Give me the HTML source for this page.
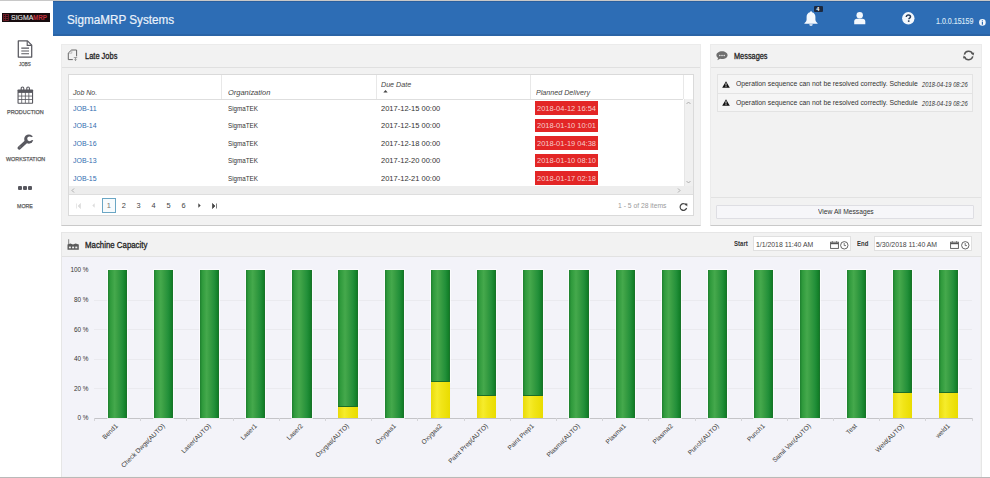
<!DOCTYPE html>
<html><head><meta charset="utf-8"><style>
*{margin:0;padding:0;box-sizing:border-box}
html,body{width:990px;height:478px;overflow:hidden;background:#fff;font-family:"Liberation Sans", sans-serif;color:#333;position:relative}
.a{position:absolute}
.t{position:absolute;white-space:nowrap;line-height:1}
</style></head>
<body>
<div class="a" style="left:53px;top:1px;width:937px;height:35px;background:#2d6db5"></div>
<div class="a" style="left:53px;top:1px;width:937px;height:1px;background:#2a5f9e"></div>
<div class="a" style="left:53px;top:34px;width:937px;height:1.5px;background:#2a64a6"></div>
<div class="t" id="t0" style="left:66.7px;top:13.21px;font-size:13.4px;color:#eaf2fb;transform:scaleX(0.8749);transform-origin:0 0;-webkit-text-stroke:0.2px #eaf2fb">SigmaMRP Systems</div>
<div class="t" id="t1" style="left:936.3px;top:18.03px;font-size:8.2px;color:#d8e6f6;transform:scaleX(0.8644);transform-origin:0 0;-webkit-text-stroke:0.15px #d8e6f6">1.0.0.15159</div>
<div class="a" style="left:2px;top:13px;width:48px;height:9px;background:#160c0e"></div>
<svg class="a" style="left:3px;top:14px" width="6" height="7" viewBox="0 0 6 7"><g stroke="#7a1f2c" stroke-width="0.8" fill="none"><rect x="0.5" y="0.5" width="5" height="6"/><path d="M0.5 2.5H5.5M0.5 4.5H5.5M2.5 0.5V6.5"/></g></svg>
<div class="t" id="t2" style="left:10.9px;top:14.59px;font-size:6.6px;color:#e0e0e0;transform:scaleX(1.0541);transform-origin:0 0;-webkit-text-stroke:0.1px #e0e0e0">SIGMA</div>
<div class="t" id="t3" style="left:33.4px;top:14.59px;font-size:6.6px;color:#c0303c;transform:scaleX(0.9620);transform-origin:0 0;font-weight:bold">MRP</div>
<svg class="a" style="left:803.5px;top:10.5px" width="14" height="15" viewBox="0 0 14 15"><path fill="#f3f8fd" d="M7 0.3c0.6 0 1 0.4 1 0.9 2.2 0.5 3.4 2.3 3.4 4.6v2.6c0 1.3 0.8 2.5 2.2 3.8v0.6H0.4v-0.6c1.4-1.3 2.2-2.5 2.2-3.8V5.8c0-2.3 1.2-4.1 3.4-4.6 0-0.5 0.4-0.9 1-0.9z M5.3 13.3h3.4c0 1-0.8 1.5-1.7 1.5s-1.7-0.5-1.7-1.5z"/></svg>
<div class="a" style="left:813.5px;top:5.5px;width:9.5px;height:6.7px;background:#1b2940;border-radius:1px"></div>
<div class="t" id="t4" style="left:816.3px;top:6.52px;font-size:5.5px;color:#fff;transform-origin:0 0;font-weight:bold">4</div>
<svg class="a" style="left:853.5px;top:11.8px" width="12" height="13" viewBox="0 0 12 13"><circle cx="5.7" cy="3.2" r="3.2" fill="#f3f8fd"/><path fill="#f3f8fd" d="M0.2 12.3V9.6c0-1.8 1.2-2.8 2.6-2.8h5.8c1.5 0 2.7 1 2.7 2.8v2.7z"/></svg>
<svg class="a" style="left:901.8px;top:11.5px" width="13" height="13" viewBox="0 0 13 13"><circle cx="6.3" cy="6.3" r="6.2" fill="#f3f8fd"/><path d="M4.3 4.9c0-1.2 0.9-2 2.1-2 1.2 0 2.1 0.7 2.1 1.8 0 1.4-1.6 1.5-1.6 2.6" fill="none" stroke="#2b3f5c" stroke-width="1.5"/><rect x="5.9" y="8.3" width="1.6" height="1.6" fill="#2b3f5c"/></svg>
<svg class="a" style="left:978.5px;top:19.2px" width="7" height="7" viewBox="0 0 7 7"><circle cx="3.4" cy="3.4" r="3.3" fill="#f3f8fd"/><rect x="2.8" y="2.9" width="1.2" height="2.8" fill="#2d6db5"/><rect x="2.8" y="1.3" width="1.2" height="1" fill="#2d6db5"/></svg>
<svg class="a" style="left:17px;top:40px" width="16" height="18" viewBox="0 0 16 18"><path d="M1.3 0.9H10.5L14.7 5.1V17.1H1.3Z" fill="none" stroke="#58585f" stroke-width="1.25" stroke-linejoin="round"/><path d="M10.2 1V5.4H14.6" fill="none" stroke="#58585f" stroke-width="1.1"/><path d="M4.3 8.1H12M4.3 11H12M4.3 13.8H12" stroke="#58585f" stroke-width="1.1"/></svg>
<div class="t" id="t5" style="left:19.4px;top:62.47px;font-size:5.8px;color:#5c5c5c;transform:scaleX(0.7662);transform-origin:0 0;-webkit-text-stroke:0.25px #5c5c5c">JOBS</div>
<svg class="a" style="left:16.5px;top:86px" width="17" height="18" viewBox="0 0 17 18"><rect x="0.5" y="3.4" width="15.6" height="14.4" rx="0.8" fill="#58585f"/><g fill="#fff"><rect x="1.60" y="6.90" width="2.75" height="2.75"/><rect x="5.15" y="6.90" width="2.75" height="2.75"/><rect x="8.70" y="6.90" width="2.75" height="2.75"/><rect x="12.25" y="6.90" width="2.75" height="2.75"/><rect x="1.60" y="10.45" width="2.75" height="2.75"/><rect x="5.15" y="10.45" width="2.75" height="2.75"/><rect x="8.70" y="10.45" width="2.75" height="2.75"/><rect x="12.25" y="10.45" width="2.75" height="2.75"/><rect x="1.60" y="14.00" width="2.75" height="2.75"/><rect x="5.15" y="14.00" width="2.75" height="2.75"/><rect x="8.70" y="14.00" width="2.75" height="2.75"/><rect x="12.25" y="14.00" width="2.75" height="2.75"/></g><path d="M4.2 5V2.3a1.3 1.3 0 0 1 2.6 0V5M9.8 5V2.3a1.3 1.3 0 0 1 2.6 0V5" fill="none" stroke="#58585f" stroke-width="1.1"/></svg>
<div class="t" id="t6" style="left:7.2px;top:109.67px;font-size:5.8px;color:#5c5c5c;transform:scaleX(0.9418);transform-origin:0 0;-webkit-text-stroke:0.25px #5c5c5c">PRODUCTION</div>
<svg class="a" style="left:14px;top:131px" width="20" height="20" viewBox="0 0 20 20"><circle cx="14.8" cy="8.1" r="4.6" fill="#58585f"/><path d="M12.6 10.3L5.2 16.9" stroke="#58585f" stroke-width="3.4" stroke-linecap="round"/><circle cx="15.6" cy="7.8" r="2.4" fill="#fff"/><path d="M16 6.6L20 5.6V9.2L16.4 9z" fill="#fff"/><circle cx="6" cy="15.9" r="0.6" fill="#999"/></svg>
<div class="t" id="t7" style="left:5.7px;top:156.87px;font-size:5.8px;color:#5c5c5c;transform:scaleX(0.9268);transform-origin:0 0;-webkit-text-stroke:0.25px #5c5c5c">WORKSTATION</div>
<div class="a" style="left:18px;top:186px;width:4.2px;height:4.3px;background:#58585f;border-radius:1px"></div>
<div class="a" style="left:23px;top:186px;width:4.2px;height:4.3px;background:#58585f;border-radius:1px"></div>
<div class="a" style="left:28px;top:186px;width:4.2px;height:4.3px;background:#58585f;border-radius:1px"></div>
<div class="t" id="t8" style="left:17.3px;top:202.53px;font-size:6.2px;color:#5c5c5c;transform:scaleX(0.8512);transform-origin:0 0;-webkit-text-stroke:0.25px #5c5c5c">MORE</div>
<div class="a" style="left:61px;top:44px;width:640px;height:182px;background:#f2f2f2;border:1px solid #ebebeb;border-bottom:1.5px solid #c9c9c9"></div>
<div class="a" style="left:62px;top:67px;width:638px;height:1px;background:#e0e0e0"></div>
<svg class="a" style="left:66px;top:48px" width="13" height="14" viewBox="0 0 13 14"><path d="M2.3 11.6V5L5.6 2H10.6V8.3M2.3 11.6H6.8" fill="none" stroke="#666" stroke-width="1"/><path d="M5.8 2.2V5.2H2.5" fill="none" stroke="#999" stroke-width="0.6"/><path d="M7.8 9.6H11.2M9.5 9.6V12.6M8.3 11.4L9.5 12.6 10.7 11.4" fill="none" stroke="#888" stroke-width="0.8"/></svg>
<div class="t" id="t9" style="left:85.3px;top:51.55px;font-size:9px;color:#222;transform:scaleX(0.8301);transform-origin:0 0;-webkit-text-stroke:0.3px #222">Late Jobs</div>
<div class="a" style="left:68px;top:74px;width:626px;height:141.8px;background:#fff;border:1px solid #dadada"></div>
<div class="a" style="left:69px;top:99px;width:614px;height:1px;background:#dedede"></div>
<div class="a" style="left:221px;top:75px;width:1px;height:24px;background:#e8e8e8"></div>
<div class="a" style="left:376px;top:75px;width:1px;height:24px;background:#e8e8e8"></div>
<div class="a" style="left:530px;top:75px;width:1px;height:24px;background:#e8e8e8"></div>
<div class="a" style="left:683px;top:75px;width:1px;height:24px;background:#e8e8e8"></div>
<div class="a" style="left:684px;top:99px;width:9px;height:87px;background:#f0f0f0;border-left:1px solid #e6e6e6"></div>
<svg class="a" style="left:686px;top:101px" width="5" height="4" viewBox="0 0 5 4"><path d="M0.5 3L2.5 1 4.5 3" fill="none" stroke="#a0a0a0" stroke-width="0.8"/></svg>
<svg class="a" style="left:686px;top:180px" width="5" height="4" viewBox="0 0 5 4"><path d="M0.5 1L2.5 3 4.5 1" fill="none" stroke="#a0a0a0" stroke-width="0.8"/></svg>
<div class="a" style="left:69px;top:186px;width:624px;height:9px;background:#ededed;border-bottom:1px solid #dedede"></div>
<svg class="a" style="left:71px;top:188px" width="4" height="5" viewBox="0 0 4 5"><path d="M3 0.5L1 2.5 3 4.5" fill="none" stroke="#a0a0a0" stroke-width="0.8"/></svg>
<svg class="a" style="left:677px;top:188px" width="4" height="5" viewBox="0 0 4 5"><path d="M1 0.5L3 2.5 1 4.5" fill="none" stroke="#a0a0a0" stroke-width="0.8"/></svg>
<div class="t" id="t10" style="left:72.9px;top:88.74px;font-size:7.6px;color:#444;transform:scaleX(0.9247);transform-origin:0 0;font-style:italic">Job No.</div>
<div class="t" id="t11" style="left:227.9px;top:88.74px;font-size:7.6px;color:#444;transform:scaleX(0.9823);transform-origin:0 0;font-style:italic">Organization</div>
<div class="t" id="t12" style="left:381.3px;top:80.84px;font-size:7.6px;color:#444;transform:scaleX(0.9379);transform-origin:0 0;font-style:italic">Due Date</div>
<svg class="a" style="left:382.5px;top:90.2px" width="5" height="2.6" viewBox="0 0 5 3"><path d="M0 3L2.5 0 5 3z" fill="#444"/></svg>
<div class="t" id="t13" style="left:536px;top:88.74px;font-size:7.6px;color:#444;transform:scaleX(0.9407);transform-origin:0 0;font-style:italic">Planned Delivery</div>
<div class="t" id="t14" style="left:72.5px;top:104.98px;font-size:7.9px;color:#336eb0;transform:scaleX(0.9017);transform-origin:0 0;">JOB-11</div>
<div class="t" id="t15" style="left:228px;top:104.98px;font-size:7.9px;color:#333;transform:scaleX(0.7954);transform-origin:0 0;">SigmaTEK</div>
<div class="t" id="t16" style="left:381px;top:104.98px;font-size:7.9px;color:#333;transform:scaleX(0.9517);transform-origin:0 0;">2017-12-15 00:00</div>
<div class="a" style="left:535.3px;top:101.10000000000001px;width:62.5px;height:13.6px;background:#e32626"></div>
<div class="t" id="t17" style="left:537px;top:104.98px;font-size:7.9px;color:#f6cccc;transform:scaleX(0.9468);transform-origin:0 0;">2018-04-12 16:54</div>
<div class="t" id="t18" style="left:72.5px;top:122.48px;font-size:7.9px;color:#336eb0;transform:scaleX(0.8817);transform-origin:0 0;">JOB-14</div>
<div class="t" id="t19" style="left:228px;top:122.48px;font-size:7.9px;color:#333;transform:scaleX(0.7954);transform-origin:0 0;">SigmaTEK</div>
<div class="t" id="t20" style="left:381px;top:122.48px;font-size:7.9px;color:#333;transform:scaleX(0.9517);transform-origin:0 0;">2017-12-15 00:00</div>
<div class="a" style="left:535.3px;top:118.6px;width:62.5px;height:13.6px;background:#e32626"></div>
<div class="t" id="t21" style="left:537px;top:122.48px;font-size:7.9px;color:#f6cccc;transform:scaleX(0.9468);transform-origin:0 0;">2018-01-10 10:01</div>
<div class="t" id="t22" style="left:72.5px;top:139.98px;font-size:7.9px;color:#336eb0;transform:scaleX(0.8817);transform-origin:0 0;">JOB-16</div>
<div class="t" id="t23" style="left:228px;top:139.98px;font-size:7.9px;color:#333;transform:scaleX(0.7954);transform-origin:0 0;">SigmaTEK</div>
<div class="t" id="t24" style="left:381px;top:139.98px;font-size:7.9px;color:#333;transform:scaleX(0.9517);transform-origin:0 0;">2017-12-18 00:00</div>
<div class="a" style="left:535.3px;top:136.1px;width:62.5px;height:13.6px;background:#e32626"></div>
<div class="t" id="t25" style="left:537px;top:139.98px;font-size:7.9px;color:#f6cccc;transform:scaleX(0.9468);transform-origin:0 0;">2018-01-19 04:38</div>
<div class="t" id="t26" style="left:72.5px;top:157.48px;font-size:7.9px;color:#336eb0;transform:scaleX(0.8817);transform-origin:0 0;">JOB-13</div>
<div class="t" id="t27" style="left:228px;top:157.48px;font-size:7.9px;color:#333;transform:scaleX(0.7954);transform-origin:0 0;">SigmaTEK</div>
<div class="t" id="t28" style="left:381px;top:157.48px;font-size:7.9px;color:#333;transform:scaleX(0.9517);transform-origin:0 0;">2017-12-20 00:00</div>
<div class="a" style="left:535.3px;top:153.6px;width:62.5px;height:13.6px;background:#e32626"></div>
<div class="t" id="t29" style="left:537px;top:157.48px;font-size:7.9px;color:#f6cccc;transform:scaleX(0.9468);transform-origin:0 0;">2018-01-10 08:10</div>
<div class="t" id="t30" style="left:72.5px;top:174.98px;font-size:7.9px;color:#336eb0;transform:scaleX(0.8817);transform-origin:0 0;">JOB-15</div>
<div class="t" id="t31" style="left:228px;top:174.98px;font-size:7.9px;color:#333;transform:scaleX(0.7954);transform-origin:0 0;">SigmaTEK</div>
<div class="t" id="t32" style="left:381px;top:174.98px;font-size:7.9px;color:#333;transform:scaleX(0.9517);transform-origin:0 0;">2017-12-21 00:00</div>
<div class="a" style="left:535.3px;top:171.1px;width:62.5px;height:13.6px;background:#e32626"></div>
<div class="t" id="t33" style="left:537px;top:174.98px;font-size:7.9px;color:#f6cccc;transform:scaleX(0.9468);transform-origin:0 0;">2018-01-17 02:18</div>
<div class="a" style="left:101.8px;top:198.1px;width:14.6px;height:14.5px;border:1px solid #6aa6c4;background:#f7fbfd"></div>
<div class="t" id="t34" style="left:88.9px;width:40px;text-align:center;top:201.91px;font-size:7.4px;color:#777;">1</div>
<div class="t" id="t35" style="left:103.7px;width:40px;text-align:center;top:201.91px;font-size:7.4px;color:#444;">2</div>
<div class="t" id="t36" style="left:118.6px;width:40px;text-align:center;top:201.91px;font-size:7.4px;color:#444;">3</div>
<div class="t" id="t37" style="left:133.6px;width:40px;text-align:center;top:201.91px;font-size:7.4px;color:#444;">4</div>
<div class="t" id="t38" style="left:148.6px;width:40px;text-align:center;top:201.91px;font-size:7.4px;color:#444;">5</div>
<div class="t" id="t39" style="left:163.6px;width:40px;text-align:center;top:201.91px;font-size:7.4px;color:#444;">6</div>
<svg class="a" style="left:75.5px;top:202.5px" width="5" height="6" viewBox="0 0 5 6"><path d="M0.5 0.5V5.5M4.5 0.5L2 3 4.5 5.5z" fill="#dcdcdc" stroke="#dcdcdc" stroke-width="0.7"/></svg>
<svg class="a" style="left:92px;top:203px" width="3" height="5" viewBox="0 0 3 5"><path d="M2.7 0.3L0.3 2.5 2.7 4.7z" fill="#dcdcdc"/></svg>
<svg class="a" style="left:198px;top:203px" width="3" height="5" viewBox="0 0 3 5"><path d="M0.3 0.3L2.7 2.5 0.3 4.7z" fill="#444"/></svg>
<svg class="a" style="left:212px;top:202.5px" width="5" height="6" viewBox="0 0 5 6"><path d="M0.5 0.5L3 3 0.5 5.5zM4.5 0.5V5.5" fill="#444" stroke="#444" stroke-width="0.7"/></svg>
<div class="t" id="t40" style="left:617.6px;top:201.58px;font-size:7.2px;color:#9a9a9a;transform:scaleX(0.9390);transform-origin:0 0;">1 - 5 of 28 items</div>
<svg class="a" style="left:679px;top:202.5px" width="9" height="8" viewBox="0 0 9 8"><path d="M7.2 2.2A3.3 3.3 0 1 0 7.6 5" fill="none" stroke="#444" stroke-width="1.2"/><path d="M5.3 0.6L8.3 0.6 8.3 3.4z" fill="#444"/></svg>
<div class="a" style="left:710px;top:44px;width:272px;height:182px;background:#f2f2f2;border:1px solid #ebebeb;border-bottom:1.5px solid #c9c9c9"></div>
<div class="a" style="left:711px;top:67px;width:270px;height:1px;background:#e0e0e0"></div>
<svg class="a" style="left:715.5px;top:50.8px" width="12" height="10" viewBox="0 0 12 10"><path d="M6 0.3C9.1 0.3 11.6 2 11.6 4.2 11.6 6.4 9.1 8 6 8 5.3 8 4.7 7.9 4.1 7.8L1.3 9.3 2.2 7C1 6.3 0.4 5.3 0.4 4.2 0.4 2 2.9 0.3 6 0.3z" fill="#6e6e6e"/><circle cx="3.8" cy="4.4" r="0.75" fill="#eee"/><circle cx="6" cy="4.4" r="0.75" fill="#eee"/><circle cx="8.2" cy="4.4" r="0.75" fill="#eee"/></svg>
<div class="t" id="t41" style="left:734.3px;top:51.95px;font-size:9px;color:#222;transform:scaleX(0.8165);transform-origin:0 0;-webkit-text-stroke:0.3px #222">Messages</div>
<svg class="a" style="left:962px;top:48.5px" width="14" height="13" viewBox="0 0 14 13"><path d="M2.4 5.6A4.3 4.3 0 0 1 10.6 5M10.8 7.4A4.3 4.3 0 0 1 2.6 8" fill="none" stroke="#555" stroke-width="1.5"/><path d="M9 4.6L12.2 3.6 11.6 6.6z M4.2 8.4L1 9.4 1.6 6.4z" fill="#555"/></svg>
<div class="a" style="left:716.5px;top:74.2px;width:256px;height:37.8px;background:#f5f5f5;border:1px solid #e3e3e3"></div>
<div class="a" style="left:717px;top:93.2px;width:255px;height:1px;background:#e3e3e3"></div>
<svg class="a" style="left:721.5px;top:80.7px" width="8" height="7" viewBox="0 0 8 7"><path d="M4 0.2L7.8 6.8H0.2z" fill="#111"/><rect x="3.55" y="2.2" width="0.9" height="2.4" fill="#f5f5f5"/><rect x="3.55" y="5.2" width="0.9" height="0.9" fill="#f5f5f5"/></svg>
<div class="t" id="t42" style="left:736px;top:80.44px;font-size:7.6px;color:#333;transform:scaleX(0.8960);transform-origin:0 0;">Operation sequence can not be resolved correctly. Schedule</div>
<div class="t" id="t43" style="left:922.4px;top:81.45px;font-size:7.0px;color:#333;transform:scaleX(0.8249);transform-origin:0 0;font-style:italic">2018-04-19 08:26</div>
<svg class="a" style="left:721.5px;top:99.1px" width="8" height="7" viewBox="0 0 8 7"><path d="M4 0.2L7.8 6.8H0.2z" fill="#111"/><rect x="3.55" y="2.2" width="0.9" height="2.4" fill="#f5f5f5"/><rect x="3.55" y="5.2" width="0.9" height="0.9" fill="#f5f5f5"/></svg>
<div class="t" id="t44" style="left:736px;top:98.84px;font-size:7.6px;color:#333;transform:scaleX(0.8960);transform-origin:0 0;">Operation sequence can not be resolved correctly. Schedule</div>
<div class="t" id="t45" style="left:922.4px;top:99.85px;font-size:7.0px;color:#333;transform:scaleX(0.8249);transform-origin:0 0;font-style:italic">2018-04-19 08:26</div>
<div class="a" style="left:711px;top:197px;width:270px;height:1px;background:#e2e2e2"></div>
<div class="a" style="left:716.3px;top:204.6px;width:258.2px;height:14.2px;background:#f6f6f9;border:1px solid #dedee3;border-radius:1px"></div>
<div class="t" id="t46" style="left:817.6px;top:208.24px;font-size:7.6px;color:#333;transform:scaleX(0.8817);transform-origin:0 0;">View All Messages</div>
<div class="a" style="left:61px;top:232px;width:921px;height:250px;background:#f2f2f2;border:1px solid #e6e6e6"></div>
<div class="a" style="left:62px;top:256px;width:919px;height:1px;background:#e2e2e2"></div>
<div class="a" style="left:62px;top:257px;width:918px;height:219px;background:#f3f3f9"></div>
<svg class="a" style="left:66px;top:238px" width="14" height="13" viewBox="0 0 14 13"><path d="M2.6 1.2V7" stroke="#999" stroke-width="1.2"/><path d="M1.5 11.8V6.4L4.4 5.6 7 6.4 9.6 5.6 12.8 6.4V11.8Z" fill="#5a5a5a"/><g fill="#eee"><rect x="2.9" y="8.6" width="2" height="1.7"/><rect x="6.1" y="8.6" width="2" height="1.7"/><rect x="9.3" y="8.6" width="2" height="1.7"/></g></svg>
<div class="t" id="t47" style="left:85.4px;top:240.75px;font-size:9px;color:#222;transform:scaleX(0.8722);transform-origin:0 0;-webkit-text-stroke:0.3px #222">Machine Capacity</div>
<div class="t" id="t48" style="left:733.8px;top:239.68px;font-size:7.2px;color:#333;transform:scaleX(0.8419);transform-origin:0 0;font-weight:bold">Start</div>
<div class="t" id="t49" style="left:856.8px;top:239.68px;font-size:7.2px;color:#333;transform:scaleX(0.8322);transform-origin:0 0;font-weight:bold">End</div>
<div class="a" style="left:753.3px;top:236.2px;width:98px;height:15.1px;background:#fff;border:1px solid #e0e0e0"></div>
<div class="t" id="t50" style="left:755.8px;top:240.58px;font-size:7.2px;color:#444;transform:scaleX(0.9563);transform-origin:0 0;">1/1/2018 11:40 AM</div>
<svg class="a" style="left:829.8px;top:240.8px" width="9" height="8" viewBox="0 0 9 8"><rect x="0.6" y="1.2" width="7.8" height="6.2" fill="none" stroke="#555" stroke-width="0.9"/><path d="M0.6 2.6H8.4" stroke="#555" stroke-width="1.2"/><path d="M2.4 0.2V1.5M6.6 0.2V1.5" stroke="#555" stroke-width="0.8"/></svg>
<svg class="a" style="left:840.2px;top:240.8px" width="9" height="9" viewBox="0 0 9 9"><circle cx="4.3" cy="4.3" r="3.7" fill="none" stroke="#555" stroke-width="0.9"/><path d="M4.2 2V4.6H6" fill="none" stroke="#555" stroke-width="0.8"/></svg>
<div class="a" style="left:873.8px;top:236.2px;width:98.5px;height:15.1px;background:#fff;border:1px solid #e0e0e0"></div>
<div class="t" id="t51" style="left:875.5px;top:240.58px;font-size:7.2px;color:#444;transform:scaleX(0.9575);transform-origin:0 0;">5/30/2018 11:40 AM</div>
<svg class="a" style="left:950.2px;top:240.8px" width="9" height="8" viewBox="0 0 9 8"><rect x="0.6" y="1.2" width="7.8" height="6.2" fill="none" stroke="#555" stroke-width="0.9"/><path d="M0.6 2.6H8.4" stroke="#555" stroke-width="1.2"/><path d="M2.4 0.2V1.5M6.6 0.2V1.5" stroke="#555" stroke-width="0.8"/></svg>
<svg class="a" style="left:960.9px;top:240.8px" width="9" height="9" viewBox="0 0 9 9"><circle cx="4.3" cy="4.3" r="3.7" fill="none" stroke="#555" stroke-width="0.9"/><path d="M4.2 2V4.6H6" fill="none" stroke="#555" stroke-width="0.8"/></svg>
<div class="t" id="t52" style="left:28.5px;width:60px;text-align:right;top:267.36px;font-size:6.4px;color:#333;">100 %</div>
<div class="a" style="left:94px;top:299.6px;width:878px;height:0.6px;background:#eaeaef"></div>
<div class="t" id="t53" style="left:28.5px;width:60px;text-align:right;top:296.96px;font-size:6.4px;color:#333;">80 %</div>
<div class="a" style="left:94px;top:329.2px;width:878px;height:0.6px;background:#eaeaef"></div>
<div class="t" id="t54" style="left:28.5px;width:60px;text-align:right;top:326.56px;font-size:6.4px;color:#333;">60 %</div>
<div class="a" style="left:94px;top:358.8px;width:878px;height:0.6px;background:#eaeaef"></div>
<div class="t" id="t55" style="left:28.5px;width:60px;text-align:right;top:356.16px;font-size:6.4px;color:#333;">40 %</div>
<div class="a" style="left:94px;top:388.4px;width:878px;height:0.6px;background:#eaeaef"></div>
<div class="t" id="t56" style="left:28.5px;width:60px;text-align:right;top:385.76px;font-size:6.4px;color:#333;">20 %</div>
<div class="t" id="t57" style="left:28.5px;width:60px;text-align:right;top:415.36px;font-size:6.4px;color:#333;">0 %</div>
<div class="a" style="left:93.5px;top:417.8px;width:878px;height:1px;background:#c4c4c8"></div>
<div class="a" style="left:94.1px;top:418px;width:0.8px;height:2.5px;background:#d4d4d8"></div>
<div class="a" style="left:140.286px;top:418px;width:0.8px;height:2.5px;background:#d4d4d8"></div>
<div class="a" style="left:186.47199999999998px;top:418px;width:0.8px;height:2.5px;background:#d4d4d8"></div>
<div class="a" style="left:232.658px;top:418px;width:0.8px;height:2.5px;background:#d4d4d8"></div>
<div class="a" style="left:278.844px;top:418px;width:0.8px;height:2.5px;background:#d4d4d8"></div>
<div class="a" style="left:325.03px;top:418px;width:0.8px;height:2.5px;background:#d4d4d8"></div>
<div class="a" style="left:371.216px;top:418px;width:0.8px;height:2.5px;background:#d4d4d8"></div>
<div class="a" style="left:417.40200000000004px;top:418px;width:0.8px;height:2.5px;background:#d4d4d8"></div>
<div class="a" style="left:463.58799999999997px;top:418px;width:0.8px;height:2.5px;background:#d4d4d8"></div>
<div class="a" style="left:509.774px;top:418px;width:0.8px;height:2.5px;background:#d4d4d8"></div>
<div class="a" style="left:555.96px;top:418px;width:0.8px;height:2.5px;background:#d4d4d8"></div>
<div class="a" style="left:602.146px;top:418px;width:0.8px;height:2.5px;background:#d4d4d8"></div>
<div class="a" style="left:648.332px;top:418px;width:0.8px;height:2.5px;background:#d4d4d8"></div>
<div class="a" style="left:694.518px;top:418px;width:0.8px;height:2.5px;background:#d4d4d8"></div>
<div class="a" style="left:740.7040000000001px;top:418px;width:0.8px;height:2.5px;background:#d4d4d8"></div>
<div class="a" style="left:786.89px;top:418px;width:0.8px;height:2.5px;background:#d4d4d8"></div>
<div class="a" style="left:833.076px;top:418px;width:0.8px;height:2.5px;background:#d4d4d8"></div>
<div class="a" style="left:879.2620000000001px;top:418px;width:0.8px;height:2.5px;background:#d4d4d8"></div>
<div class="a" style="left:925.448px;top:418px;width:0.8px;height:2.5px;background:#d4d4d8"></div>
<div class="a" style="left:971.634px;top:418px;width:0.8px;height:2.5px;background:#d4d4d8"></div>
<div class="a" style="left:107.54px;top:270.0px;width:19.3px;height:147.556px;background:linear-gradient(90deg,#1d7f2e 0%,#2f9a3c 12%,#45a94c 35%,#3a9f44 50%,#23903a 75%,#138029 92%,#1a6e2a 100%);box-shadow:0 0 0 0.8px rgba(255,255,255,0.85)"></div>
<div class="a" style="left:107.54px;top:417.556px;width:19.3px;height:0.444px;background:linear-gradient(90deg,#e9da08 0%,#f6ec2c 32%,#f1e518 55%,#e9dc00 100%)"></div>
<div class="t" id="t58" style="left:17.393px;width:100px;text-align:right;top:422.15px;font-size:6.5px;color:#333;transform:rotate(-45deg);transform-origin:100% 50%;">Bend1</div>
<div class="a" style="left:153.73px;top:270.0px;width:19.3px;height:148.0px;background:linear-gradient(90deg,#1d7f2e 0%,#2f9a3c 12%,#45a94c 35%,#3a9f44 50%,#23903a 75%,#138029 92%,#1a6e2a 100%);box-shadow:0 0 0 0.8px rgba(255,255,255,0.85)"></div>
<div class="t" id="t59" style="left:63.57899999999998px;width:100px;text-align:right;top:422.15px;font-size:6.5px;color:#333;transform:rotate(-45deg);transform-origin:100% 50%;">Check Dwgs(AUTO)</div>
<div class="a" style="left:199.91px;top:270.0px;width:19.3px;height:148.0px;background:linear-gradient(90deg,#1d7f2e 0%,#2f9a3c 12%,#45a94c 35%,#3a9f44 50%,#23903a 75%,#138029 92%,#1a6e2a 100%);box-shadow:0 0 0 0.8px rgba(255,255,255,0.85)"></div>
<div class="t" id="t60" style="left:109.76499999999999px;width:100px;text-align:right;top:422.15px;font-size:6.5px;color:#333;transform:rotate(-45deg);transform-origin:100% 50%;">Laser(AUTO)</div>
<div class="a" style="left:246.1px;top:270.0px;width:19.3px;height:148.0px;background:linear-gradient(90deg,#1d7f2e 0%,#2f9a3c 12%,#45a94c 35%,#3a9f44 50%,#23903a 75%,#138029 92%,#1a6e2a 100%);box-shadow:0 0 0 0.8px rgba(255,255,255,0.85)"></div>
<div class="t" id="t61" style="left:155.951px;width:100px;text-align:right;top:422.15px;font-size:6.5px;color:#333;transform:rotate(-45deg);transform-origin:100% 50%;">Laser1</div>
<div class="a" style="left:292.29px;top:270.0px;width:19.3px;height:148.0px;background:linear-gradient(90deg,#1d7f2e 0%,#2f9a3c 12%,#45a94c 35%,#3a9f44 50%,#23903a 75%,#138029 92%,#1a6e2a 100%);box-shadow:0 0 0 0.8px rgba(255,255,255,0.85)"></div>
<div class="t" id="t62" style="left:202.137px;width:100px;text-align:right;top:422.15px;font-size:6.5px;color:#333;transform:rotate(-45deg);transform-origin:100% 50%;">Laser2</div>
<div class="a" style="left:338.47px;top:270.0px;width:19.3px;height:136.9px;background:linear-gradient(90deg,#1d7f2e 0%,#2f9a3c 12%,#45a94c 35%,#3a9f44 50%,#23903a 75%,#138029 92%,#1a6e2a 100%);box-shadow:0 0 0 0.8px rgba(255,255,255,0.85)"></div>
<div class="a" style="left:338.47px;top:406.9px;width:19.3px;height:11.1px;background:linear-gradient(90deg,#e9da08 0%,#f6ec2c 32%,#f1e518 55%,#e9dc00 100%)"></div>
<div class="a" style="left:338.47px;top:406.09999999999997px;width:19.3px;height:0.8px;background:#1c6e28"></div>
<div class="t" id="t63" style="left:248.32299999999998px;width:100px;text-align:right;top:422.15px;font-size:6.5px;color:#333;transform:rotate(-45deg);transform-origin:100% 50%;">Oxygas(AUTO)</div>
<div class="a" style="left:384.66px;top:270.0px;width:19.3px;height:148.0px;background:linear-gradient(90deg,#1d7f2e 0%,#2f9a3c 12%,#45a94c 35%,#3a9f44 50%,#23903a 75%,#138029 92%,#1a6e2a 100%);box-shadow:0 0 0 0.8px rgba(255,255,255,0.85)"></div>
<div class="t" id="t64" style="left:294.50899999999996px;width:100px;text-align:right;top:422.15px;font-size:6.5px;color:#333;transform:rotate(-45deg);transform-origin:100% 50%;">Oxygas1</div>
<div class="a" style="left:430.85px;top:270.0px;width:19.3px;height:112.184px;background:linear-gradient(90deg,#1d7f2e 0%,#2f9a3c 12%,#45a94c 35%,#3a9f44 50%,#23903a 75%,#138029 92%,#1a6e2a 100%);box-shadow:0 0 0 0.8px rgba(255,255,255,0.85)"></div>
<div class="a" style="left:430.85px;top:382.18399999999997px;width:19.3px;height:35.816px;background:linear-gradient(90deg,#e9da08 0%,#f6ec2c 32%,#f1e518 55%,#e9dc00 100%)"></div>
<div class="a" style="left:430.85px;top:381.38399999999996px;width:19.3px;height:0.8px;background:#1c6e28"></div>
<div class="t" id="t65" style="left:340.695px;width:100px;text-align:right;top:422.15px;font-size:6.5px;color:#333;transform:rotate(-45deg);transform-origin:100% 50%;">Oxygas2</div>
<div class="a" style="left:477.03px;top:270.0px;width:19.3px;height:125.8px;background:linear-gradient(90deg,#1d7f2e 0%,#2f9a3c 12%,#45a94c 35%,#3a9f44 50%,#23903a 75%,#138029 92%,#1a6e2a 100%);box-shadow:0 0 0 0.8px rgba(255,255,255,0.85)"></div>
<div class="a" style="left:477.03px;top:395.8px;width:19.3px;height:22.2px;background:linear-gradient(90deg,#e9da08 0%,#f6ec2c 32%,#f1e518 55%,#e9dc00 100%)"></div>
<div class="a" style="left:477.03px;top:395.0px;width:19.3px;height:0.8px;background:#1c6e28"></div>
<div class="t" id="t66" style="left:386.88100000000003px;width:100px;text-align:right;top:422.15px;font-size:6.5px;color:#333;transform:rotate(-45deg);transform-origin:100% 50%;">Paint Prep(AUTO)</div>
<div class="a" style="left:523.22px;top:270.0px;width:19.3px;height:125.8px;background:linear-gradient(90deg,#1d7f2e 0%,#2f9a3c 12%,#45a94c 35%,#3a9f44 50%,#23903a 75%,#138029 92%,#1a6e2a 100%);box-shadow:0 0 0 0.8px rgba(255,255,255,0.85)"></div>
<div class="a" style="left:523.22px;top:395.8px;width:19.3px;height:22.2px;background:linear-gradient(90deg,#e9da08 0%,#f6ec2c 32%,#f1e518 55%,#e9dc00 100%)"></div>
<div class="a" style="left:523.22px;top:395.0px;width:19.3px;height:0.8px;background:#1c6e28"></div>
<div class="t" id="t67" style="left:433.067px;width:100px;text-align:right;top:422.15px;font-size:6.5px;color:#333;transform:rotate(-45deg);transform-origin:100% 50%;">Paint Prep1</div>
<div class="a" style="left:569.4px;top:270.0px;width:19.3px;height:148.0px;background:linear-gradient(90deg,#1d7f2e 0%,#2f9a3c 12%,#45a94c 35%,#3a9f44 50%,#23903a 75%,#138029 92%,#1a6e2a 100%);box-shadow:0 0 0 0.8px rgba(255,255,255,0.85)"></div>
<div class="t" id="t68" style="left:479.25300000000004px;width:100px;text-align:right;top:422.15px;font-size:6.5px;color:#333;transform:rotate(-45deg);transform-origin:100% 50%;">Plasma(AUTO)</div>
<div class="a" style="left:615.59px;top:270.0px;width:19.3px;height:148.0px;background:linear-gradient(90deg,#1d7f2e 0%,#2f9a3c 12%,#45a94c 35%,#3a9f44 50%,#23903a 75%,#138029 92%,#1a6e2a 100%);box-shadow:0 0 0 0.8px rgba(255,255,255,0.85)"></div>
<div class="t" id="t69" style="left:525.4390000000001px;width:100px;text-align:right;top:422.15px;font-size:6.5px;color:#333;transform:rotate(-45deg);transform-origin:100% 50%;">Plasma1</div>
<div class="a" style="left:661.78px;top:270.0px;width:19.3px;height:148.0px;background:linear-gradient(90deg,#1d7f2e 0%,#2f9a3c 12%,#45a94c 35%,#3a9f44 50%,#23903a 75%,#138029 92%,#1a6e2a 100%);box-shadow:0 0 0 0.8px rgba(255,255,255,0.85)"></div>
<div class="t" id="t70" style="left:571.6250000000001px;width:100px;text-align:right;top:422.15px;font-size:6.5px;color:#333;transform:rotate(-45deg);transform-origin:100% 50%;">Plasma2</div>
<div class="a" style="left:707.96px;top:270.0px;width:19.3px;height:148.0px;background:linear-gradient(90deg,#1d7f2e 0%,#2f9a3c 12%,#45a94c 35%,#3a9f44 50%,#23903a 75%,#138029 92%,#1a6e2a 100%);box-shadow:0 0 0 0.8px rgba(255,255,255,0.85)"></div>
<div class="t" id="t71" style="left:617.811px;width:100px;text-align:right;top:422.15px;font-size:6.5px;color:#333;transform:rotate(-45deg);transform-origin:100% 50%;">Punch(AUTO)</div>
<div class="a" style="left:754.15px;top:270.0px;width:19.3px;height:148.0px;background:linear-gradient(90deg,#1d7f2e 0%,#2f9a3c 12%,#45a94c 35%,#3a9f44 50%,#23903a 75%,#138029 92%,#1a6e2a 100%);box-shadow:0 0 0 0.8px rgba(255,255,255,0.85)"></div>
<div class="t" id="t72" style="left:663.9970000000001px;width:100px;text-align:right;top:422.15px;font-size:6.5px;color:#333;transform:rotate(-45deg);transform-origin:100% 50%;">Punch1</div>
<div class="a" style="left:800.33px;top:270.0px;width:19.3px;height:148.0px;background:linear-gradient(90deg,#1d7f2e 0%,#2f9a3c 12%,#45a94c 35%,#3a9f44 50%,#23903a 75%,#138029 92%,#1a6e2a 100%);box-shadow:0 0 0 0.8px rgba(255,255,255,0.85)"></div>
<div class="t" id="t73" style="left:710.1830000000001px;width:100px;text-align:right;top:422.15px;font-size:6.5px;color:#333;transform:rotate(-45deg);transform-origin:100% 50%;">Samil Van(AUTO)</div>
<div class="a" style="left:846.52px;top:270.0px;width:19.3px;height:148.0px;background:linear-gradient(90deg,#1d7f2e 0%,#2f9a3c 12%,#45a94c 35%,#3a9f44 50%,#23903a 75%,#138029 92%,#1a6e2a 100%);box-shadow:0 0 0 0.8px rgba(255,255,255,0.85)"></div>
<div class="t" id="t74" style="left:756.369px;width:100px;text-align:right;top:422.15px;font-size:6.5px;color:#333;transform:rotate(-45deg);transform-origin:100% 50%;">Test</div>
<div class="a" style="left:892.71px;top:270.0px;width:19.3px;height:122.84px;background:linear-gradient(90deg,#1d7f2e 0%,#2f9a3c 12%,#45a94c 35%,#3a9f44 50%,#23903a 75%,#138029 92%,#1a6e2a 100%);box-shadow:0 0 0 0.8px rgba(255,255,255,0.85)"></div>
<div class="a" style="left:892.71px;top:392.84px;width:19.3px;height:25.16px;background:linear-gradient(90deg,#e9da08 0%,#f6ec2c 32%,#f1e518 55%,#e9dc00 100%)"></div>
<div class="a" style="left:892.71px;top:392.03999999999996px;width:19.3px;height:0.8px;background:#1c6e28"></div>
<div class="t" id="t75" style="left:802.5550000000001px;width:100px;text-align:right;top:422.15px;font-size:6.5px;color:#333;transform:rotate(-45deg);transform-origin:100% 50%;">Weld(AUTO)</div>
<div class="a" style="left:938.89px;top:270.0px;width:19.3px;height:122.84px;background:linear-gradient(90deg,#1d7f2e 0%,#2f9a3c 12%,#45a94c 35%,#3a9f44 50%,#23903a 75%,#138029 92%,#1a6e2a 100%);box-shadow:0 0 0 0.8px rgba(255,255,255,0.85)"></div>
<div class="a" style="left:938.89px;top:392.84px;width:19.3px;height:25.16px;background:linear-gradient(90deg,#e9da08 0%,#f6ec2c 32%,#f1e518 55%,#e9dc00 100%)"></div>
<div class="a" style="left:938.89px;top:392.03999999999996px;width:19.3px;height:0.8px;background:#1c6e28"></div>
<div class="t" id="t76" style="left:848.7410000000001px;width:100px;text-align:right;top:422.15px;font-size:6.5px;color:#333;transform:rotate(-45deg);transform-origin:100% 50%;">weld1</div>
<div class="a" style="left:0px;top:0px;width:990px;height:1px;background:#c8c8c8"></div>
<div class="a" style="left:0px;top:476.7px;width:990px;height:1.3px;background:#b9b9b9"></div>
</body></html>
